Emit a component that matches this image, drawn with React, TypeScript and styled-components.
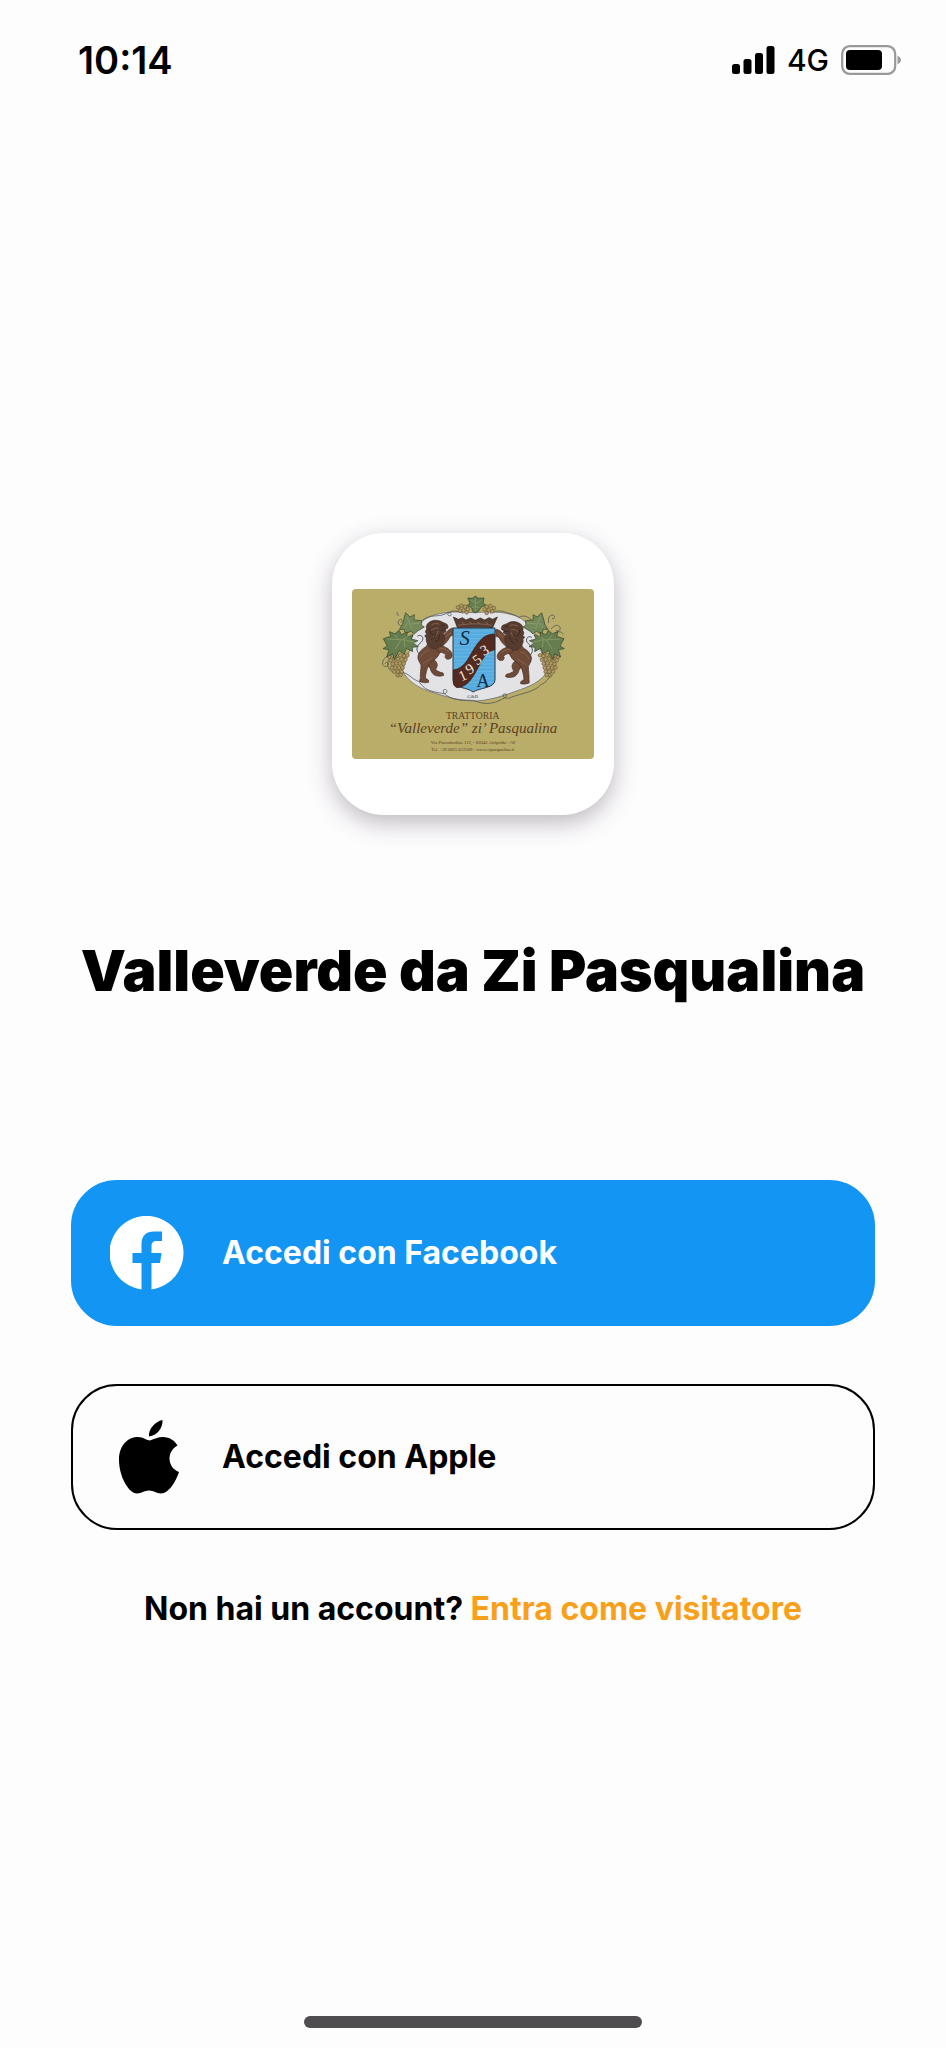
import React from "react";
import styled, { createGlobalStyle } from "styled-components";

const GlobalStyle = createGlobalStyle`
  *, *::before, *::after { box-sizing: border-box; }
  body {
    margin: 0;
    background: #fefdfe;
    color: #000;
    font-family: Inter, "Liberation Sans", sans-serif;
  }
`;

const Screen = styled.div`
  min-height: 100vh;
  display: flex;
  flex-direction: column;
`;

const StatusBar = styled.header`
  display: flex;
  align-items: center;
  justify-content: space-between;
  height: 120px;
  padding: 0 44px 0 78px;
`;

const Clock = styled.time`
  font-size: 38px;
  line-height: 44px;
  font-weight: 600;
`;

const StatusIcons = styled.div`
  display: flex;
  align-items: center;
  gap: 12px;
`;

const Network = styled.span`
  font-size: 30px;
  line-height: 36px;
  font-weight: 500;
`;

const Main = styled.main`
  flex: 1;
  display: flex;
  flex-direction: column;
  align-items: center;
  padding: 413px 71px 0;
`;

const LogoCard = styled.div`
  display: grid;
  place-items: center;
  width: 282px;
  height: 282px;
  border-radius: 52px;
  background: #fff;
  box-shadow: 0 8px 24px rgba(40, 30, 45, 0.3);
`;

const Crest = styled.svg`
  width: 242px;
  height: 170px;
  border-radius: 4px;
`;

const Title = styled.h1`
  margin: 120px 0 173px;
  font-size: 57px;
  line-height: 72px;
  font-weight: 900;
  text-align: center;
  white-space: nowrap;
`;

const Actions = styled.div`
  align-self: stretch;
  display: flex;
  flex-direction: column;
  gap: 58px;
`;

const LoginButton = styled.button<{ $filled?: boolean }>`
  display: flex;
  align-items: center;
  gap: 38px;
  width: 100%;
  height: 146px;
  padding: 0 37px;
  border: 2px solid ${(p) => (p.$filled ? "#1295f3" : "#000")};
  border-radius: 46px;
  background: ${(p) => (p.$filled ? "#1295f3" : "transparent")};
  color: ${(p) => (p.$filled ? "#fff" : "#000")};
  font-family: inherit;
  font-size: 32px;
  line-height: 40px;
  font-weight: 700;
  text-align: left;
  cursor: pointer;
`;

const BrandIcon = styled.svg`
  flex: none;
  width: 74px;
  height: 74px;
  fill: currentColor;
`;

const Guest = styled.p`
  margin: 58px 0 0;
  font-size: 32px;
  line-height: 42px;
  font-weight: 700;
  text-align: center;
  white-space: nowrap;
`;

const GuestLink = styled.a`
  color: #f9a01b;
  text-decoration: none;
`;

const HomeArea = styled.footer`
  display: flex;
  justify-content: center;
  padding: 0 0 20px;
`;

const HomeIndicator = styled.div`
  width: 338px;
  height: 12px;
  border-radius: 6px;
  background: #504d50;
`;

function SignalIcon() {
  return (
    <svg width="43" height="28" viewBox="0 0 43 28" aria-hidden="true">
      <rect x="0" y="18" width="8" height="10" rx="2.5" />
      <rect x="11.5" y="13" width="8" height="15" rx="2.5" />
      <rect x="23" y="7" width="8" height="21" rx="2.5" />
      <rect x="34.5" y="0" width="8" height="28" rx="2.5" />
    </svg>
  );
}

function BatteryIcon() {
  return (
    <svg width="61" height="30" viewBox="0 0 61 30" aria-hidden="true">
      <rect x="1.2" y="1.2" width="53" height="27.6" rx="7.5" fill="none" stroke="#99979a" strokeWidth="2.2" />
      <rect x="5" y="5" width="36" height="20" rx="4" />
      <path d="M56.500 11c4.500 1 4.500 7 0 8z" fill="#99979a" />
    </svg>
  );
}

function GrapeBunch({ points }: { points: number[][] }) {
  return (
    <g fill="#b29a62" stroke="#594a2c" strokeWidth="1.600">
      {points.map(([x, y]) => (
        <circle key={`${x}-${y}`} cx={x} cy={y} r="5.5" />
      ))}
    </g>
  );
}

const leftGrapes = [
  [208, 410], [219, 407], [230, 406], [241, 405], [252, 408], [262, 406],
  [212, 421], [223, 418], [234, 417], [245, 418], [256, 419],
  [218, 432], [229, 430], [240, 430], [251, 431],
  [216, 443], [226, 443], [237, 443], [248, 443],
  [223, 455], [234, 455], [245, 455], [233, 466], [242, 465],
];

const rightGrapes = leftGrapes.map(([x, y]) => [922 - x, y]);

const topGrapes = [
  [414, 262], [424, 257], [435, 260], [444, 268], [430, 271], [420, 272], [440, 277],
  [522, 264], [511, 258], [500, 260], [494, 268], [506, 271], [517, 274], [500, 279],
];

function Lion() {
  return (
    <g strokeLinejoin="round" strokeLinecap="round">
      <path
        fill="none"
        stroke="#4b5268"
        strokeWidth="3"
        d="M300 404c-10-8-12-19-5-29 7-9 16-12 13-22-2-7-10-9-15-5"
      />
      <g fill="#6f4b37" stroke="#46302a" strokeWidth="2">
        <path d="M330 412c14 6 22 14 22 24-1 8-6 11-4 15l13 6c7 0 11 3 10 9-8 4-20 3-28-1-6-5-11-11-12-19-7-8-14-18-17-27z" />
        <path d="M325 350c1 12-1 22-7 30-12 6-21 16-24 27-2 12 5 19 9 28 0 14-3 27-2 40l-1 9c8 5 18 5 26 3 2-7-4-10-10-12 1-16 5-30 12-43 8-12 24-14 29-29 8-9 12-21 14-33z" />
        <path d="M349 376c10 0 22 2 32 8 9 6 17 14 15 25-2 7-9 10-16 8-5-3-6-8-3-12-4-8-17-8-25-12z" />
        <path d="M346 352c13 1 23-5 32-14 6-8 13-12 20-14 6 1 5 8 2 12l1 9c-7 1-11 4-14 11-7 13-19 22-32 24z" />
        <path fill="#563b2f" d="M319 319c2-10 12-16 24-18 10-1 19 2 25 6l12 5c4 4 5 9 3 13l-7 3 2 7-8 4c2 8 5 14 3 22-2 10-8 13-14 20-8 2-13 6-19 6-8-2-11-6-15-12-5-6-8-14-6-21l-5-7 6-4c-4-6-5-11-1-14z" />
      </g>
      <g fill="none" stroke="#88614a" strokeWidth="3">
        <path d="M302 412c3-11 13-18 25-21M309 432c7-8 18-12 28-19M358 384c11 0 20 3 27 11M379 348l14-11" />
        <path d="M335 314c7-4 14-4 22-2M334 330c8-4 12-7 20-5M341 351c8-4 12-9 13-17" />
      </g>
      <path fill="none" stroke="#32211a" strokeWidth="2" d="M365 316l8 0M363 331l13-2M329 326c-1 10 3 17 10 20M347 340c-2 11-7 16-12 19M359 344c1 11-5 18-13 22" />
    </g>
  );
}

function VineLeaves() {
  return (
    <g stroke="#304429" strokeWidth="2" strokeLinejoin="round">
      <path
        fill="#74895a"
        d="M257 278l13 13 13-7-1 16 24 2-2 13 9 6-20 12-10 9-10-8-17 7-4-14-14 2 10-17 3-14z"
      />
      <path
        fill="#657d4f"
        d="M190 356l22-7-4-14 17 6 12-10 7 13 18-7-2 14 20-7-6 13 20 5-15 7 16 11-18 2 1 13-19-10-6 17-16-10-14 27-5-18-18 10 7-22-18-3 13-8z"
      />
      <path fill="none" stroke="#98a56e" d="M261 291l15 35m-13-17l-10 15m20-12l27-3M200 357l57 3 32 9m-53-10l-12-15m19 16l-17 27m22-28l22-14m-18 16l3 20" />
    </g>
  );
}

function CrestArt() {
  return (
    <Crest viewBox="96 207 726 510" role="img" aria-label="Trattoria Valleverde zi' Pasqualina">
      <rect x="96" y="207" width="726" height="510" fill="#b9ad69" />
      <path
        fill="#e3e3e6"
        stroke="#5f6068"
        strokeWidth="2"
        d="M247 452c8-30 22-45 25-80 5-47 29-75 75-88 40-11 76-8 112-6 43-2 89-6 131 11 45 19 65 64 72 102 8 20 16 44 19 63-14 29-52 46-94 60-36 13-83 29-128 29-59-3-103-20-139-32-31-11-59-32-73-59z"
      />
      <g fill="none" stroke="#4c5058" strokeWidth="2.200">
        <path d="M237 455c27 2 35 19 55 28 10 4 20 3 18-5-4-8-17 3-10 11 16 24 42 26 65 31 18 5 20-10 10-12-9 0-6 12 4 18 29 19 53 13 82 15 38 18 68 7 92-7 14-9 3-16-4-10-4 8 12 15 27 7 32-12 67-15 87-37 15-4 19-20 35-29" />
        <path d="M308 300c24-18 45-8 67-18 13-8 22-2 18 4-6 5-15-3-6-9 17-8 30-2 43 3m80 0c17-9 35-9 50-2 18 6 23 4 36 14 16-8 27-3 43 11" />
        <path d="M246 318c-14-3-14-14-7-19 8-5 10 8 3 9m-5-23c-7 2-8-7-3-9M205 408c-14 6-18 15-17 26 7 9 17 6 18-2-2-8-10-6-10 0m12-15c-10 12-7 34 17 42M686 309c-3-21 6-25 14-23 8 3 3 12-4 10m-3 31c10-12 23-15 27-5 4 9-8 15-12 8m-2 8c13-6 20-2 24 6" />
      </g>
      <GrapeBunch points={leftGrapes} />
      <GrapeBunch points={rightGrapes} />
      <GrapeBunch points={topGrapes} />
      <path
        fill="#657d4f"
        stroke="#304429"
        strokeWidth="2"
        strokeLinejoin="round"
        d="M443 234l14 1 9-7 9 7 17-1-3 15 8 6-14 7-7 12-10 5-9-5-2-11-14-6 9-8z"
      />
      <path fill="none" stroke="#98a56e" strokeWidth="2" d="M466 235v38m0-25l-14-8m14 12l18-11m-18 18l-11 4m12-2l12 1" />
      <VineLeaves />
      <g transform="translate(922 0) scale(-1 1)">
        <VineLeaves />
      </g>
      <Lion />
      <g transform="translate(928 4) scale(-1 1)">
        <Lion />
      </g>
      <path
        fill="#573c31"
        stroke="#30231c"
        strokeWidth="2"
        d="M400 291l15 7 12-5 11 7 14-6 14 7 15-7 13 6 13-7 11 5 14-7-15 34c-38-4-66-4-104 0z"
      />
      <path fill="none" stroke="#9c745d" strokeWidth="2" d="M415 316c35-6 67-6 101 0M425 307l8 3m15-3l8 3m16-3l8 3m17-3l7 4" />
      <path fill="#54ace0" stroke="#293746" strokeWidth="3" d="M399 324h126v157c-2 24-46 22-66 35-18-15-57-10-60-35z" />
      <path
        fill="none"
        stroke="#76bce4"
        strokeWidth="2"
        d="M402 333h120M402 344h120M402 355h120M402 366h120M402 377h120M402 388h120M402 399h120M402 410h120M402 421h120M402 432h120M402 443h120M402 454h120M402 465h120M402 476h120M404 487h116M420 498h80"
      />
      <path
        fill="#54291f"
        stroke="#341c17"
        strokeWidth="2"
        d="M400 450c34-6 42-31 60-60 19-31 34-48 64-48v47c-28 5-35 28-53 60-18 33-31 51-60 54-9-5-12-9-11-21z"
      />
      <g fontFamily="Liberation Serif, serif" textAnchor="middle">
        <text x="434" y="376" fontSize="62" fontStyle="italic" fill="#172a42">S</text>
        <text x="489" y="502" fontSize="56" fill="#172a42">A</text>
        <g fontSize="44" fill="#f1e7dd">
          <text transform="translate(434 480) rotate(-24)">1</text>
          <text transform="translate(457 459) rotate(-32)">9</text>
          <text transform="translate(480 431) rotate(-36)">5</text>
          <text transform="translate(501 403) rotate(-30)">3</text>
        </g>
        <text x="458" y="534" fontSize="15" fill="#4b4441">G&amp;B</text>
        <g fill="#5c4224">
          <text x="458" y="598" fontSize="29">TRATTORIA</text>
          <text x="459" y="640" fontSize="45" fontStyle="italic">“Valleverde” zi’ Pasqualina</text>
          <text x="460" y="673" fontSize="14">Via Pianodardine 112, - 83042 Atripalda - AV</text>
          <text x="458" y="693" fontSize="14">Tel. +39 0825 622569 - www.zipasqualina.it</text>
        </g>
      </g>
    </Crest>
  );
}

function FacebookIcon() {
  return (
    <BrandIcon viewBox="0 0 74 74" aria-hidden="true">
      <path d="M31.500 73.500A37 37 0 1 1 41.500 73.500V47H50L51.500 37H41.500V30C41.500 26 44 25 47 25H52V15.500H44C36 15.500 31.500 20 31.500 28V37H22.500V47H31.500Z" />
    </BrandIcon>
  );
}

function AppleIcon() {
  return (
    <BrandIcon viewBox="0 0 74 74" aria-hidden="true">
      <path d="M52.500 0C53 8 47 15.500 39 16.500C38 9.500 45 1.500 52.500 0Z" />
      <path d="M40 20.500C44 19 48 17 53 17C59.500 17 64.500 20.500 67.500 25.500C56 32 57.500 47.500 69 52C66 61 59 73.500 51 73.500C46 73.500 44.500 70.500 39 70.500C33.500 70.500 32 73.500 27 73.500C18.500 73.500 9 56 9 40C9 24 19 17 28 17C33 17 37 20.500 40 20.500Z" />
    </BrandIcon>
  );
}

export default function App() {
  return (
    <>
      <GlobalStyle />
      <Screen>
        <StatusBar>
          <Clock>10:14</Clock>
          <StatusIcons>
            <SignalIcon />
            <Network>4G</Network>
            <BatteryIcon />
          </StatusIcons>
        </StatusBar>
        <Main>
          <LogoCard>
            <CrestArt />
          </LogoCard>
          <Title>Valleverde da Zi Pasqualina</Title>
          <Actions>
            <LoginButton type="button" $filled>
              <FacebookIcon />
              Accedi con Facebook
            </LoginButton>
            <LoginButton type="button">
              <AppleIcon />
              Accedi con Apple
            </LoginButton>
          </Actions>
          <Guest>
            Non hai un account? <GuestLink href="#visitatore">Entra come visitatore</GuestLink>
          </Guest>
        </Main>
        <HomeArea>
          <HomeIndicator />
        </HomeArea>
      </Screen>
    </>
  );
}
